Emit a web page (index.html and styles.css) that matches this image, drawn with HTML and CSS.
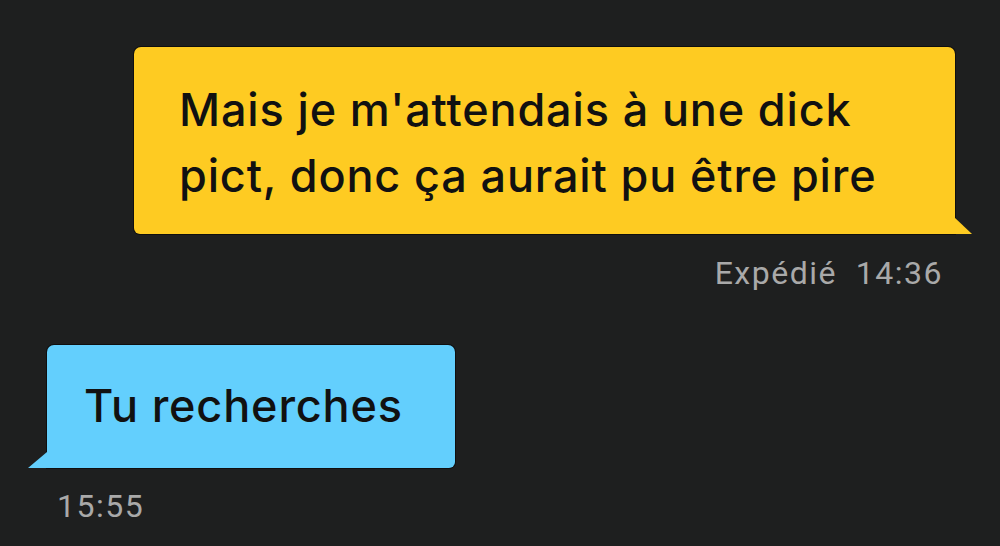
FILE: index.html
```html
<!DOCTYPE html>
<html lang="fr">
<head>
    <meta charset="UTF-8">
    <meta name="viewport" content="width=device-width, initial-scale=1.0">
    <title>Conversation</title>
    <link rel="stylesheet" href="styles.css">
</head>
<body>

    <div class="chat">
        <!-- message envoyé -->
        <div class="row sent">
            <div class="bubble yellow">
                Mais je m'attendais à une dick<br>
                pict, donc ça aurait pu être pire
            </div>
            <div class="meta">Expédié&nbsp; 14:36</div>
        </div>

        <!-- message reçu -->
        <div class="row received">
            <div class="bubble blue">Tu recherches</div>
            <div class="meta">15:55</div>
        </div>
    </div>

</body>
</html>
```

FILE: styles.css
```css
body {
    margin: 0;
    background: #1e1f1f;
    font-family: "Inter", "Noto Sans", sans-serif;
    color: #111;
    height: 546px;
    overflow: hidden;
}
.chat {
    display: flex;
    flex-direction: column;
    padding: 47px 28px 0 28px;
}
.row {
    display: flex;
    flex-direction: column;
}
.sent {
    align-items: flex-end;
}
.received {
    align-items: flex-start;
    margin-top: 52px;
}
.bubble {
    position: relative;
    box-shadow: 0 0 0 1px rgba(0, 0, 0, 0.5);
    font-weight: 500;
    font-size: 45px;
    line-height: 66px;
    letter-spacing: 0.85px;
}
.bubble::after {
    content: "";
    position: absolute;
    bottom: 0;
    width: 18px;
    height: 17px;
}
.yellow {
    background: #fecb22;
    width: 821px;
    height: 187px;
    box-sizing: border-box;
    padding: 30px 0 0 45px;
    margin-right: 17px;
    border-radius: 7px 7px 0 6px;
}
.yellow::after {
    right: -17px;
    background: #fecb22;
    clip-path: polygon(0 0, 100% 100%, 0 100%);
}
.blue {
    background: #63cffd;
    width: 408px;
    height: 123px;
    box-sizing: border-box;
    padding: 28px 0 0 37px;
    margin-left: 19px;
    border-radius: 7px 7px 6px 0;
}
.blue::after {
    left: -19px;
    width: 19px;
    height: 16px;
    background: #63cffd;
    clip-path: polygon(100% 0, 100% 100%, 0 100%);
}
.meta {
    color: #a9a9a9;
    font-family: "Roboto", "Noto Sans", sans-serif;
    font-size: 32px;
    line-height: 40px;
    letter-spacing: 1.5px;
    margin-top: 19px;
}
.sent .meta {
    margin-right: 29px;
}
.received .meta {
    margin-left: 29px;
    margin-top: 18px;
}
```
